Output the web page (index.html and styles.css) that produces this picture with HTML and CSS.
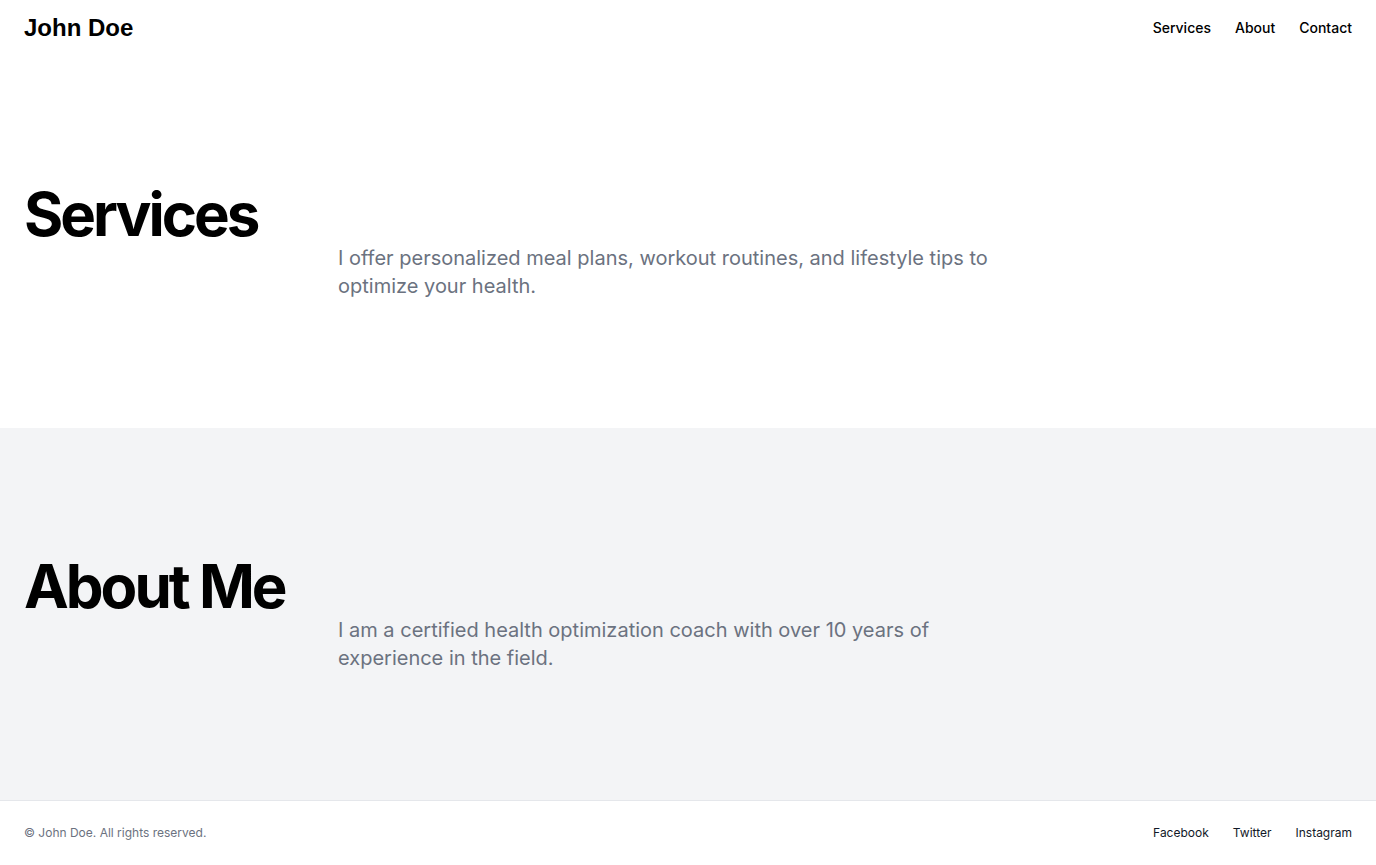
FILE: index.html
```html
<!DOCTYPE html>
<html lang="en">
<head>
<meta charset="utf-8">
<title>John Doe</title>
<link rel="stylesheet" href="styles.css">
</head>
<body>
<header class="site-header">
  <a class="brand" href="#">John Doe</a>
  <nav class="nav">
    <a href="#services">Services</a>
    <a href="#about">About</a>
    <a href="#contact">Contact</a>
  </nav>
</header>
<main>
  <section class="section" id="services">
    <div class="section-grid">
      <h2 class="section-title">Services</h2>
      <p class="section-text">I offer personalized meal plans, workout routines, and lifestyle tips to optimize your health.</p>
    </div>
  </section>
  <section class="section section-alt" id="about">
    <div class="section-grid">
      <h2 class="section-title">About Me</h2>
      <p class="section-text">I am a certified health optimization coach with over 10 years of experience in the field.</p>
    </div>
  </section>
</main>
<footer class="site-footer" id="contact">
  <p class="copyright">© John Doe. All rights reserved.</p>
  <nav class="footer-nav">
    <a href="#">Facebook</a>
    <a href="#">Twitter</a>
    <a href="#">Instagram</a>
  </nav>
</footer>
</body>
</html>
```
FILE: styles.css
```css
* { box-sizing: border-box; }
html, body { margin: 0; padding: 0; }
body {
  font-family: Inter, "Noto Sans", sans-serif;
  color: #111827;
  background: #ffffff;
}
a { color: inherit; text-decoration: none; }

.site-header {
  height: 56px;
  padding: 0 24px;
  display: flex;
  align-items: center;
  justify-content: space-between;
}
.brand {
  font-family: "Liberation Sans", Arial, sans-serif;
  font-weight: 700;
  font-size: 24px;
  line-height: 32px;
  color: #000;
}
.nav {
  display: flex;
  gap: 24px;
  font-size: 14px;
  line-height: 20px;
  font-weight: 500;
  color: #000;
}

.section {
  padding: 128px 24px;
}
.section-alt { background: #f3f4f6; }
.section-grid {
  display: grid;
  grid-template-columns: 314px 1fr;
}
.section-title {
  grid-column: 1 / 3;
  margin: 0;
  font-size: 60px;
  line-height: 60px;
  font-weight: 700;
  letter-spacing: -0.05em;
  color: #000;
}
.section-text {
  grid-column: 2;
  margin: 0;
  max-width: 672px;
  font-size: 20px;
  line-height: 28px;
  color: #6b7280;
}

.site-footer {
  border-top: 1px solid #e5e7eb;
  padding: 24px;
  display: flex;
  align-items: center;
  justify-content: space-between;
}
.copyright {
  margin: 0;
  font-size: 12px;
  line-height: 16px;
  color: #6b7280;
}
.footer-nav {
  display: flex;
  gap: 24px;
  font-size: 12px;
  line-height: 16px;
  color: #111827;
}
```
